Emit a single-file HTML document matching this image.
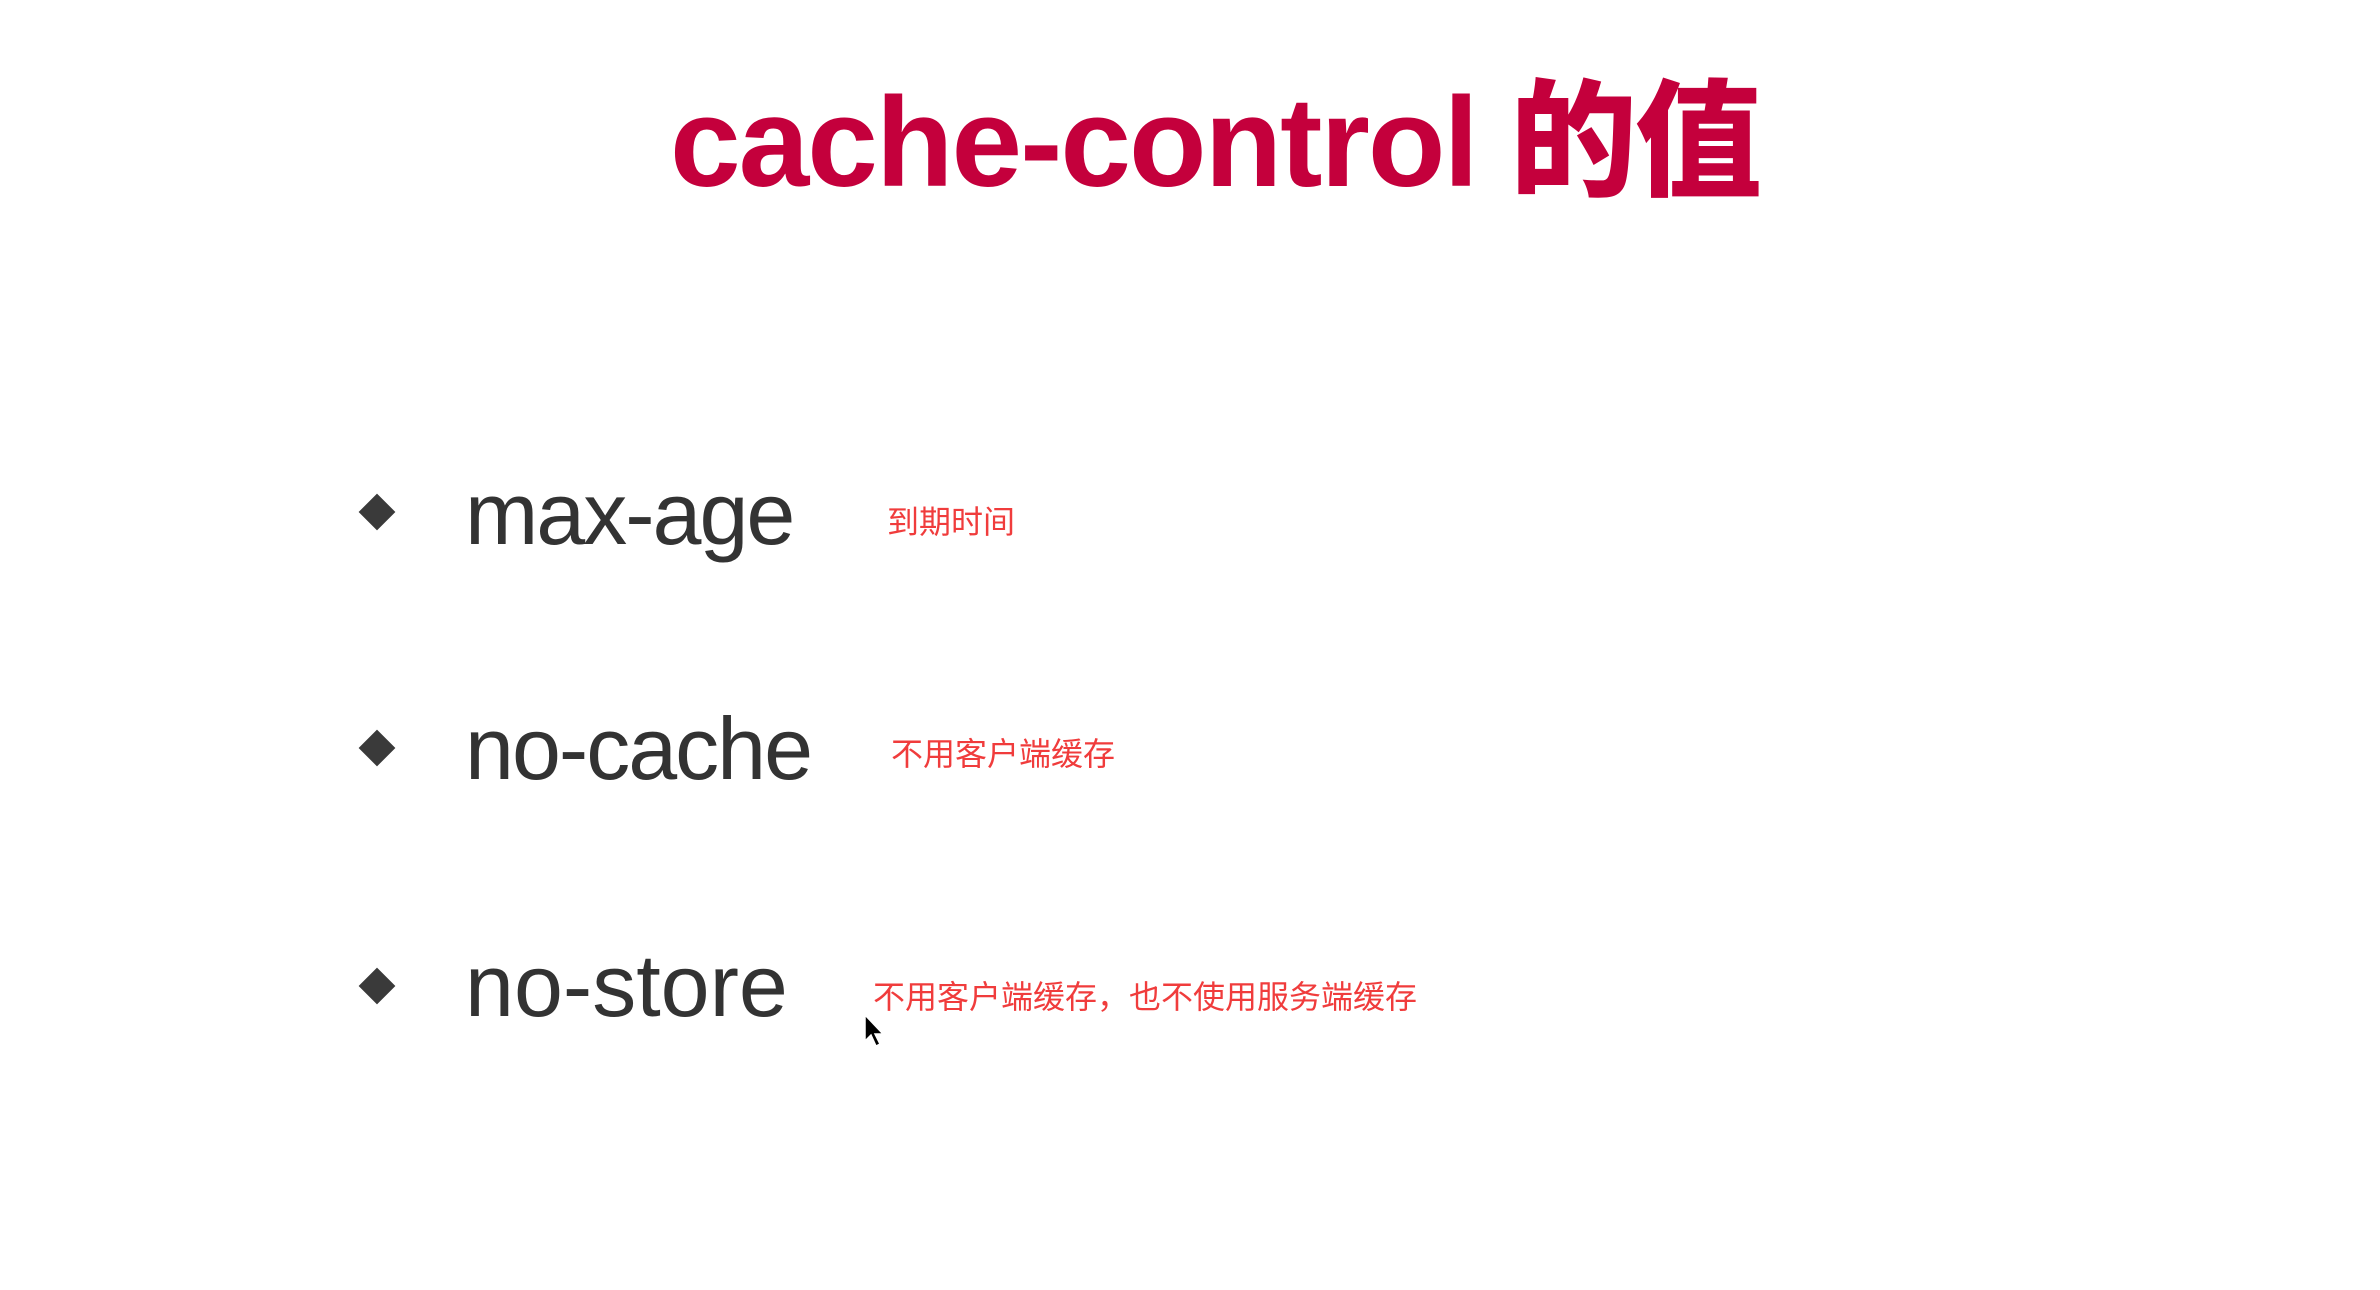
<!DOCTYPE html>
<html><head><meta charset="utf-8"><style>
html,body{margin:0;padding:0;background:#fff;width:2380px;height:1290px;overflow:hidden;position:relative}
.t{position:absolute;white-space:nowrap;line-height:1;font-family:"Liberation Sans","Noto Sans CJK SC",sans-serif}
.title{left:670px;top:68px;font-size:127px;font-weight:bold;color:#c4003c;letter-spacing:-2px}
.item{left:465px;font-size:88px;color:#333;letter-spacing:-2px}
.note{font-size:32px;color:#f03c3c}
.d{position:absolute;width:26px;height:26px;background:#3a3a3a;transform:rotate(45deg)}
</style></head><body>
<div class="t title">cache-control <span style="font-family:'Noto Sans CJK SC',sans-serif;font-weight:900">的值</span></div>

<div class="d" style="left:364px;top:499px"></div>
<div class="t item" style="top:470px">max-age</div>
<div class="t note" style="left:887px;top:506px">到期时间</div>

<div class="d" style="left:364px;top:735px"></div>
<div class="t item" style="top:705px">no-cache</div>
<div class="t note" style="left:891px;top:738px">不用客户端缓存</div>

<div class="d" style="left:364px;top:973px"></div>
<div class="t item" style="top:942px;letter-spacing:0">no-store</div>
<div class="t note" style="left:873px;top:981px">不用客户端缓存，也不使用服务端缓存</div>

<svg style="position:absolute;left:863px;top:1013px" width="24" height="36" viewBox="0 0 24 36">
<path d="M2 2 L2 28 L8 22 L13 33 L17 31 L12 21 L20 21 Z" fill="#000" stroke="#fff" stroke-width="1.5"/>
</svg>
</body></html>
